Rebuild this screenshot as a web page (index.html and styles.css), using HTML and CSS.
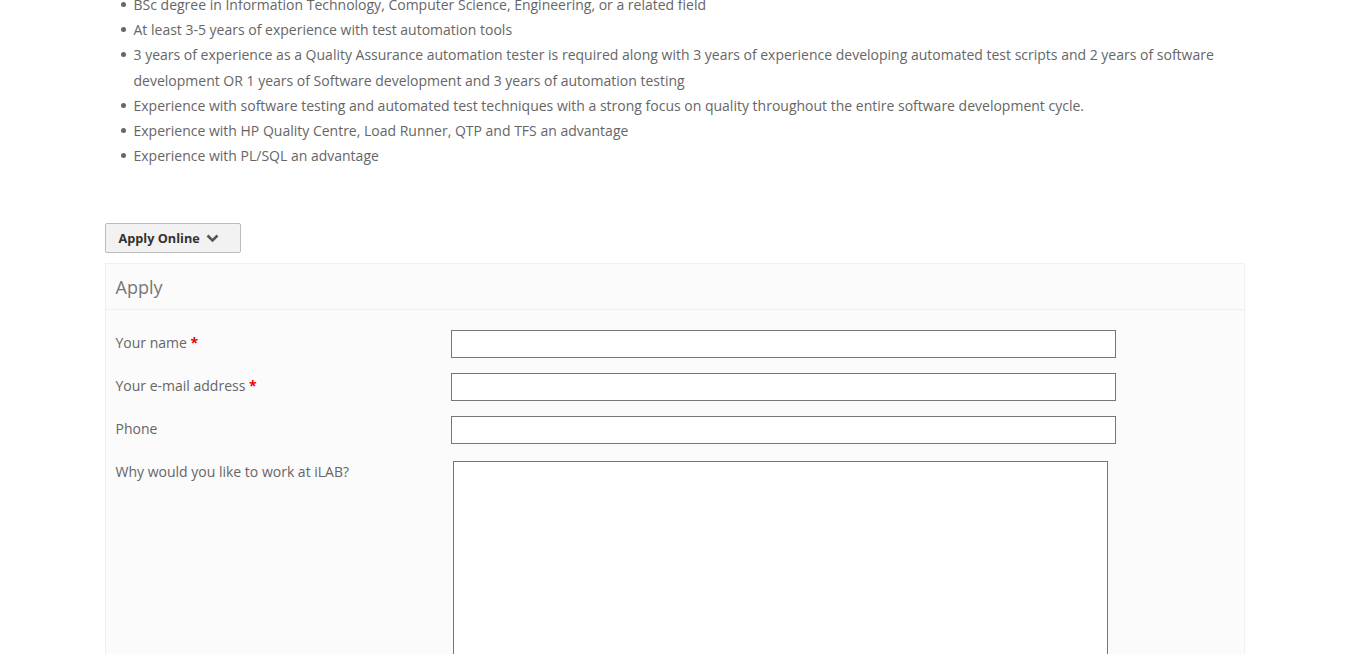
FILE: index.html
```html
<!DOCTYPE html>
<html>
<head>
<meta charset="utf-8">
<link rel="stylesheet" href="styles.css">
</head>
<body>
<div class="page">
<div class="container">
  <ul class="reqs">
    <li>BSc degree in Information Technology, Computer Science, Engineering, or a related field</li>
    <li>At least 3-5 years of experience with test automation tools</li>
    <li>3 years of experience as a Quality Assurance automation tester is required along with 3 years of experience developing automated test scripts and 2 years of software development OR 1 years of Software development and 3 years of automation testing</li>
    <li>Experience with software testing and automated test techniques with a strong focus on quality throughout the entire software development cycle.</li>
    <li>Experience with HP Quality Centre, Load Runner, QTP and TFS an advantage</li>
    <li>Experience with PL/SQL an advantage</li>
  </ul>

  <button class="apply-btn" type="button">Apply Online
    <svg class="chev" width="13" height="9" viewBox="0 0 13 9"><path d="M1.5 1.5 L6.5 6.5 L11.5 1.5" fill="none" stroke="#555" stroke-width="2.6"/></svg>
  </button>

  <div class="panel">
    <div class="panel-heading">Apply</div>
    <form class="panel-body">
      <div class="row">
        <label class="lbl">Your name <span class="req">*</span></label>
        <input class="field" type="text">
      </div>
      <div class="row">
        <label class="lbl">Your e-mail address <span class="req">*</span></label>
        <input class="field" type="text">
      </div>
      <div class="row">
        <label class="lbl">Phone</label>
        <input class="field" type="text">
      </div>
      <div class="row">
        <label class="lbl">Why would you like to work at iLAB?</label>
        <textarea class="area"></textarea>
      </div>
    </form>
  </div>
</div>
</div>
</body>
</html>
```

FILE: styles.css
```css
html, body {
  margin: 0;
  padding: 0;
  background: #fff;
  overflow: hidden;
}
body {
  font-family: "Open Sans", "Liberation Sans", sans-serif;
  font-size: 14px;
  color: #666;
}
.page {
  width: 1349px;
}
.container {
  width: 1140px;
  margin: 0 auto;
}
.reqs {
  margin: -8px 0 0 0;
  padding-left: 29px;
  line-height: 25.2px;
  list-style: none;
}
.reqs li {
  position: relative;
}
.reqs li::before {
  content: "";
  position: absolute;
  left: -13px;
  top: 10px;
  width: 5px;
  height: 5px;
  border-radius: 50%;
  background: #666;
}
.apply-btn {
  margin-top: 55px;
  display: flex;
  align-items: center;
  gap: 6px;
  height: 30px;
  width: 136px;
  padding: 0 0 0 13px;
  background: #f2f2f2;
  border: 1px solid #bbb;
  border-radius: 2px;
  font-family: "Open Sans", "Liberation Sans", sans-serif;
  font-weight: 700;
  font-size: 12.7px;
  color: #333;
}
.chev {
  margin-top: 1px;
}
.panel {
  margin-top: 10px;
  background: #fbfbfb;
  border: 1px solid #f0f0f0;
  height: 420px;
}
.panel-heading {
  padding: 10px 10px 9px;
  font-size: 18px;
  line-height: 26px;
  color: #777;
  border-bottom: 1px solid #f0f0f0;
}
.panel-body {
  padding: 20px 10px;
}
.row {
  display: flex;
  align-items: flex-start;
  margin-bottom: 15px;
}
.lbl {
  width: 335px;
  line-height: 24px;
  padding-top: 1px;
}
.req {
  color: #e00;
  font-weight: 700;
}
.field {
  box-sizing: border-box;
  width: 665px;
  height: 28px;
  margin: 0;
  border: 1px solid #767676;
  background: #fff;
}
.area {
  box-sizing: border-box;
  margin: 2px 0 0 2px;
  width: 655px;
  height: 250px;
  border: 1px solid #767676;
  background: #fff;
  resize: none;
}
```
